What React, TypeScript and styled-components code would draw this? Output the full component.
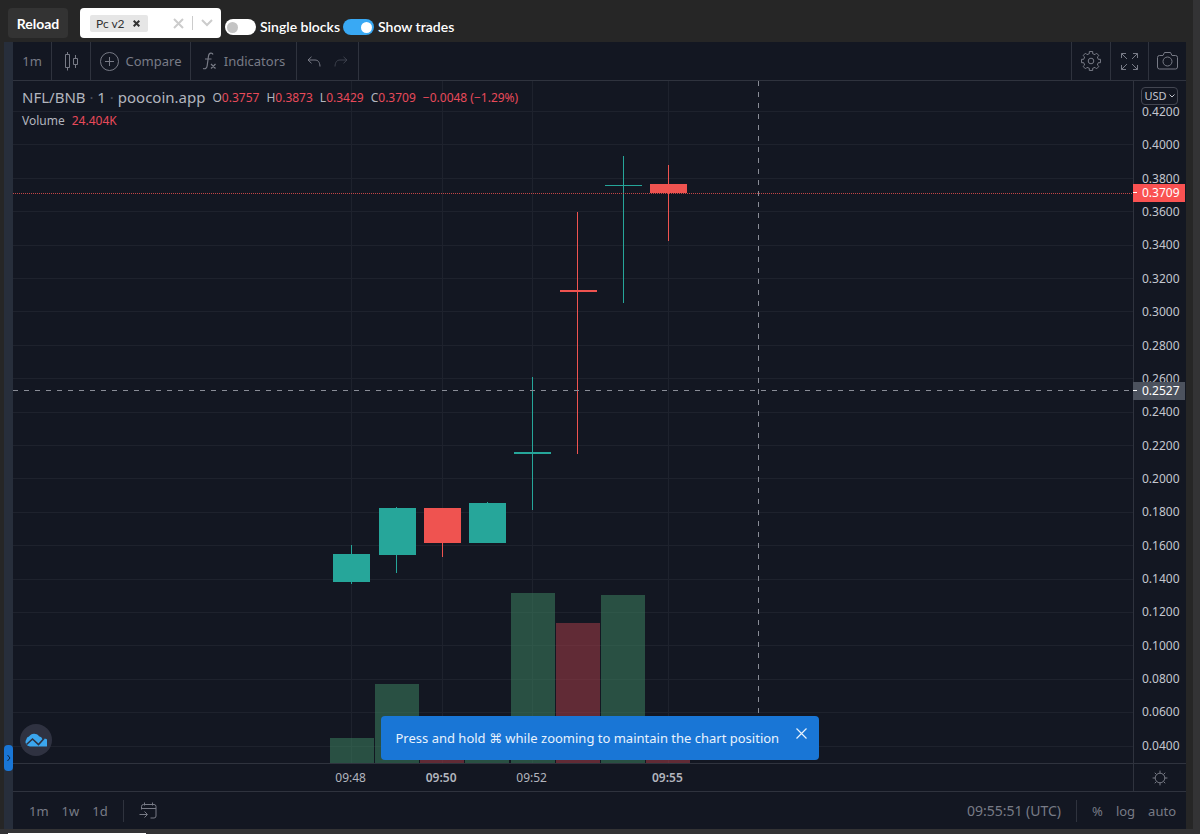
import React from "react";
import styled, { createGlobalStyle, css } from "styled-components";

const sans = `"Noto Sans", "DejaVu Sans", sans-serif`;
const lato = `Lato, "Liberation Sans", sans-serif`;

const color = {
  page: "#262626",
  edge: "#333335",
  chart: "#131722",
  strip: "#272e3b",
  line: "#2f333e",
  muted: "#787b86",
  text: "#b2b5be",
  up: "#26a69a",
  down: "#ef5350",
  value: "#e84a5a",
  blue: "#1976d6",
};

const GlobalStyle = createGlobalStyle`
  *, *::before, *::after { box-sizing: border-box; }
  body { margin: 0; background: ${color.page}; font-family: ${sans}; }
  button, input { font: inherit; color: inherit; margin: 0; padding: 0; border: 0; background: none; }
  button { cursor: pointer; }
  svg { display: block; }
`;

const Page = styled.div`
  display: flex;
  flex-direction: column;
  min-height: 100vh;
  border-right: 7px solid ${color.edge};
`;

/* ---------- header ---------- */

const Header = styled.header`
  display: flex;
  align-items: flex-start;
  height: 42px;
  padding: 8px 8px 0;
  font-family: ${lato};
  color: #fff;
`;

const ReloadButton = styled.button`
  width: 60px;
  height: 30px;
  margin-right: 12px;
  border-radius: 4px;
  background: #333;
  font-size: 14px;
  font-weight: 700;
`;

const Picker = styled.div`
  display: flex;
  align-items: center;
  width: 141px;
  height: 30px;
  margin-right: 4px;
  padding-left: 10px;
  border-radius: 4px;
  background: #fff;
  color: #333;
`;

const Chip = styled.span`
  display: flex;
  align-items: center;
  height: 17px;
  padding-left: 6px;
  border-radius: 2px;
  background: #e6e6e6;
  font-size: 12px;
`;

const ChipRemove = styled.button`
  display: grid;
  place-items: center;
  width: 23px;
  height: 17px;
`;

const PickerInput = styled.input`
  flex: 1;
  min-width: 0;
  outline: 0;
`;

const PickerButton = styled.button`
  display: grid;
  place-items: center;
  width: 28px;
  height: 30px;
  color: #ccc;
`;

const PickerDivider = styled.span`
  width: 1px;
  height: 14px;
  background: #ccc;
`;

const Toggle = styled.label`
  display: flex;
  align-items: center;
  gap: 4px;
  margin: 9px 3px 0 0;
  font-size: 14px;
  line-height: 20px;
  font-weight: 600;
  white-space: nowrap;
`;

const ToggleInput = styled.input`
  appearance: none;
  display: flex;
  align-items: center;
  width: 31px;
  height: 16px;
  padding: 0 2px;
  border-radius: 8px;
  background: #fff;
  cursor: pointer;

  &::before {
    content: "";
    width: 11px;
    height: 11px;
    border-radius: 50%;
    background: #c4c4c4;
  }
  &:checked {
    justify-content: flex-end;
    background: #39a9f4;
  }
  &:checked::before {
    background: #fff;
  }
`;

/* ---------- chart frame ---------- */

const Frame = styled.main`
  display: flex;
  margin: 0 7px 0 4px;
`;

const DrawingStrip = styled.aside`
  position: relative;
  flex: 0 0 9px;
  background: ${color.strip};
`;

const StripHandle = styled.button`
  position: absolute;
  left: 0;
  bottom: 58px;
  display: grid;
  place-items: center;
  width: 9px;
  height: 26px;
  border-radius: 4px;
  background: ${color.blue};
  color: #0d2440;
`;

const Chart = styled.section`
  flex: 1;
  min-width: 0;
  background: ${color.chart};
  color: ${color.muted};
`;

const Toolbar = styled.div`
  display: flex;
  height: 39px;
  border-bottom: 1px solid ${color.line};
`;

const ToolGroup = styled.div<{ $side: "left" | "right"; $width: number }>`
  display: flex;
  width: ${(p) => p.$width}px;
  padding: 0 4px;
  ${(p) =>
    p.$side === "left"
      ? css`
          border-right: 1px solid ${color.line};
        `
      : css`
          border-left: 1px solid ${color.line};
        `}
`;

const ToolButton = styled.button`
  flex: 1;
  display: flex;
  align-items: center;
  justify-content: center;
  gap: 7px;
  font-size: 13px;
  white-space: nowrap;
`;

const Spacer = styled.div`
  flex: 1;
`;

const PlotRow = styled.div`
  position: relative;
  display: flex;
  height: 682px;
`;

const Plot = styled.div`
  position: relative;
  flex: 1;
  min-width: 0;
  overflow: hidden;
`;

const Legend = styled.div`
  position: absolute;
  top: 5px;
  left: 9px;
  display: flex;
  flex-direction: column;
  gap: 1px;
  color: ${color.text};
  white-space: nowrap;
`;

const LegendRow = styled.div`
  display: flex;
  align-items: center;
  gap: 7px;
  height: 22px;
  font-size: 12px;
`;

const SymbolName = styled.h1`
  margin: 0;
  font-size: 15px;
  font-weight: 400;
`;

const Dot = styled.span`
  color: #4c505c;
`;

const Value = styled.span`
  color: ${color.value};
`;

const LogoBadge = styled.a`
  position: absolute;
  left: 7px;
  bottom: 7px;
  display: grid;
  place-items: center;
  width: 32px;
  height: 32px;
  border-radius: 50%;
  background: #2f3241;
`;

const PriceAxis = styled.div`
  position: relative;
  flex: 0 0 53px;
  display: flex;
  flex-direction: column;
  justify-content: space-between;
  padding: 23px 0 9px 8px;
  border-left: 1px solid ${color.line};
  color: #c3c6cf;
  font-size: 12px;
  line-height: 16px;
`;

const PriceTag = styled.div<{ $top: number; $fill: string }>`
  position: absolute;
  top: ${(p) => p.$top}px;
  left: -1px;
  right: 1px;
  height: 18px;
  padding-left: 9px;
  background: ${(p) => p.$fill};
  color: #fff;
  line-height: 18px;

  &::before {
    content: "";
    position: absolute;
    top: 8px;
    left: 0;
    width: 4px;
    height: 1px;
    background: #fff;
  }
`;

const CurrencyButton = styled.button`
  position: absolute;
  top: 6px;
  left: 7px;
  display: flex;
  align-items: center;
  justify-content: center;
  gap: 2px;
  width: 37px;
  height: 18px;
  border: 1px solid #434651;
  border-radius: 4px;
  background: ${color.chart};
  font-size: 11px;
`;

const Notice = styled.div`
  position: absolute;
  bottom: 3px;
  left: 50%;
  display: flex;
  width: 438px;
  height: 44px;
  padding-left: 15px;
  transform: translateX(-50%);
  border-radius: 4px;
  background: ${color.blue};
  color: #e8f2fd;
  font-size: 13px;
  line-height: 44px;
  white-space: nowrap;
`;

const NoticeClose = styled.button`
  display: grid;
  place-items: center;
  width: 34px;
  height: 34px;
  margin-left: auto;
`;

const TimeRow = styled.div`
  display: flex;
  height: 29px;
  border-top: 1px solid ${color.line};
  border-bottom: 1px solid ${color.line};
`;

const TimeAxis = styled.div`
  flex: 1;
  min-width: 0;
  padding-left: 315px;
`;

const TimeSlots = styled.div`
  display: grid;
  grid-template-columns: repeat(8, 1fr);
  width: 362px;
  text-align: center;
  font-size: 12px;
  line-height: 28px;
  color: ${color.text};
`;

const TimeLabel = styled.span<{ $major: boolean }>`
  font-weight: ${(p) => (p.$major ? 600 : 400)};
`;

const AxisSettings = styled.button`
  display: grid;
  place-items: center;
  flex: 0 0 53px;
  border-left: 1px solid ${color.line};
`;

const BottomBar = styled.div`
  display: flex;
  align-items: center;
  height: 37px;
  padding: 0 10px 0 16px;
  font-size: 13px;
  white-space: nowrap;
`;

const ButtonRun = styled.div`
  display: flex;
  gap: 13px;
`;

const Clock = styled.button`
  font-size: 14px;
`;

const BarDivider = styled.span`
  width: 1px;
  height: 22px;
  margin: 0 15px;
  background: ${color.line};
`;

const Footer = styled.footer`
  flex: 1;
  display: flex;
  align-items: flex-end;
  min-height: 5px;
  padding-left: 8px;
  background: ${color.edge};
`;

const FooterTab = styled.div`
  width: 138px;
  height: 1px;
  background: #fff;
`;

/* ---------- data ---------- */

type Bar = {
  open: number;
  close: number;
  high: number;
  low: number;
  up: boolean;
  volume: number;
};

/* vertical pixel positions inside the plot, top edge = 0 */
const bars: Bar[] = [
  { open: 473, close: 501, high: 464, low: 503, up: true, volume: 25 },
  { open: 427, close: 474, high: 426, low: 492, up: true, volume: 79 },
  { open: 427, close: 462, high: 427, low: 476, up: false, volume: 6 },
  { open: 422, close: 462, high: 421, low: 462, up: true, volume: 10 },
  { open: 371, close: 373, high: 296, low: 429, up: true, volume: 170 },
  { open: 209, close: 211, high: 131, low: 373, up: false, volume: 140 },
  { open: 104, close: 105, high: 75, low: 222, up: true, volume: 168 },
  { open: 103, close: 112, high: 84, low: 160, up: false, volume: 12 },
];

const times = ["09:48", "", "09:50", "", "09:52", "", "", "09:55"];
const prices = Array.from({ length: 20 }, (_, i) => (0.42 - i * 0.02).toFixed(4));
const plotHeight = 682;
const slot = 45.25;
const barCenter = (i: number) => Math.round(338 + i * slot);
const bodyLeft = (i: number) => Math.round(320.4 + i * slot);
const volumeLeft = (i: number) => Math.floor(317 + i * slot);
const priceLine = (i: number) => Math.round(30 + i * 33.4);

function CandlePlot() {
  return (
    <svg width="100%" height={plotHeight} shapeRendering="crispEdges" role="img" aria-label="NFL/BNB price and volume">
      {prices.map((p, i) => (
        <rect key={p} x="0" y={priceLine(i)} width="100%" height="1" fill="#1e222d" />
      ))}
      {times.map((t, i) =>
        t ? <rect key={t} x={barCenter(i)} y="0" width="1" height={plotHeight} fill="#1e222d" /> : null
      )}
      {bars.map((b, i) => (
        <rect
          key={i}
          x={volumeLeft(i)}
          y={plotHeight - b.volume}
          width="44"
          height={b.volume}
          fill={b.up ? "#3e8562" : "#a83e48"}
          fillOpacity="0.52"
        />
      ))}
      {bars.map((b, i) => (
        <g key={i} fill={b.up ? color.up : color.down}>
          <rect x={barCenter(i)} y={b.high} width="1" height={b.low - b.high} />
          <rect x={bodyLeft(i)} y={b.open} width="37" height={b.close - b.open} />
        </g>
      ))}
      <line x1="0" x2="100%" y1="112.5" y2="112.5" stroke={color.down} strokeDasharray="1 1" strokeOpacity="0.8" />
      <line x1="0" x2="100%" y1="309.5" y2="309.5" stroke="#8a8d97" strokeDasharray="5 6" />
      <line x1="745.5" x2="745.5" y1="0" y2={plotHeight} stroke="#8a8d97" strokeDasharray="5 6" />
    </svg>
  );
}

/* ---------- icons ---------- */

type IconProps = { w: number; h?: number; sw?: number; box?: string; children: React.ReactNode };

const Icon = ({ w, h = w, sw = 1, box, children }: IconProps) => (
  <svg
    width={w}
    height={h}
    viewBox={box ?? `0 0 ${w} ${h}`}
    fill="none"
    stroke="currentColor"
    strokeWidth={sw}
    aria-hidden="true"
  >
    {children}
  </svg>
);

const gearPath = (() => {
  const teeth = 8;
  const pts: string[] = [];
  for (let i = 0; i < teeth; i++) {
    const a = (i * 2 * Math.PI) / teeth;
    [
      [-0.22, 7.5],
      [-0.18, 9.6],
      [0.18, 9.6],
      [0.22, 7.5],
    ].forEach(([d, r]) => {
      pts.push(`${(11 + r * Math.sin(a + d)).toFixed(2)} ${(11 - r * Math.cos(a + d)).toFixed(2)}`);
    });
  }
  return `M${pts.join("L")}Z`;
})();

const sunRays = Array.from({ length: 8 }, (_, i) => {
  const a = (i * Math.PI) / 4;
  const at = (r: number) => `${(8 + r * Math.cos(a)).toFixed(2)} ${(8 + r * Math.sin(a)).toFixed(2)}`;
  return `M${at(5)}L${at(7.4)}`;
}).join("");

export default function App() {
  return (
    <>
      <GlobalStyle />
      <Page>
        <Header>
          <ReloadButton type="button">Reload</ReloadButton>
          <Picker>
            <Chip>
              Pc v2
              <ChipRemove type="button" aria-label="Remove Pc v2">
                <Icon w={7} sw={2}>
                  <path d="M.7 .7l5.6 5.6M6.3 .7L.7 6.3" />
                </Icon>
              </ChipRemove>
            </Chip>
            <PickerInput aria-label="Liquidity pool" />
            <PickerButton type="button" aria-label="Clear">
              <Icon w={11} sw={2}>
                <path d="M1 1l9 9M10 1L1 10" />
              </Icon>
            </PickerButton>
            <PickerDivider />
            <PickerButton type="button" aria-label="Open list">
              <Icon w={12} h={8} sw={2}>
                <path d="M1 1l5 5 5-5" />
              </Icon>
            </PickerButton>
          </Picker>
          <Toggle>
            <ToggleInput type="checkbox" />
            Single blocks
          </Toggle>
          <Toggle>
            <ToggleInput type="checkbox" defaultChecked />
            Show trades
          </Toggle>
        </Header>

        <Frame>
          <DrawingStrip>
            <StripHandle type="button" aria-label="Show drawing tools">
              <Icon w={4} h={8}>
                <path d="M.5 1l2.5 3-2.5 3" />
              </Icon>
            </StripHandle>
          </DrawingStrip>
          <Chart>
            <Toolbar>
              <ToolGroup $side="left" $width={39}>
                <ToolButton type="button">1m</ToolButton>
              </ToolGroup>
              <ToolGroup $side="left" $width={39}>
                <ToolButton type="button" aria-label="Candles">
                  <Icon w={13} h={20}>
                    <path d="M.5 3.500h4v13h-4zM2.500 1v2.500M2.500 16.500V19.500M8.500 7.500h4v6h-4zM10.500 4v3.500M10.500 13.500V17" />
                  </Icon>
                </ToolButton>
              </ToolGroup>
              <ToolGroup $side="left" $width={100}>
                <ToolButton type="button">
                  <Icon w={19}>
                    <circle cx="9.500" cy="9.500" r="9" />
                    <path d="M9.500 5v9M5 9.500h9" />
                  </Icon>
                  Compare
                </ToolButton>
              </ToolGroup>
              <ToolGroup $side="left" $width={106}>
                <ToolButton type="button">
                  <Icon w={15} h={18} sw={1.2}>
                    <path d="M11 2.500C10.500 .8 7 .2 6.500 4L5.200 13.500C4.900 16.300 3.500 17.200 1 16.500M3 7h6.500M9 12l4.500 4.500M13.500 12L9 16.500" />
                  </Icon>
                  Indicators
                </ToolButton>
              </ToolGroup>
              <ToolGroup $side="left" $width={62}>
                <ToolButton type="button" aria-label="Undo">
                  <Icon w={14} h={11}>
                    <path d="M4.500 .8L1 4l3.500 3.300M1 4h7c3 0 4.800 2 5 6.500" />
                  </Icon>
                </ToolButton>
                <ToolButton type="button" aria-label="Redo" disabled>
                  <Icon w={14} h={11}>
                    <path stroke="#3e424e" d="M9.500 .8L13 4 9.500 7.300M13 4H6C3 4 1.200 6 1 10.500" />
                  </Icon>
                </ToolButton>
              </ToolGroup>
              <Spacer />
              <ToolGroup $side="right" $width={39}>
                <ToolButton type="button" aria-label="Settings">
                  <Icon w={22}>
                    <path strokeLinejoin="round" d={gearPath} />
                    <circle cx="11" cy="11" r="2.800" />
                  </Icon>
                </ToolButton>
              </ToolGroup>
              <ToolGroup $side="right" $width={38}>
                <ToolButton type="button" aria-label="Fullscreen">
                  <Icon w={17}>
                    <path d="M.5 5V.5H5M.5 .5l5.500 5.500M12 .5h4.500V5M16.500 .5L11 6M.5 12v4.500H5M.5 16.500L6 11M12 16.500h4.500V12M16.500 16.500L11 11" />
                  </Icon>
                </ToolButton>
              </ToolGroup>
              <ToolGroup $side="right" $width={38}>
                <ToolButton type="button" aria-label="Take a snapshot">
                  <Icon w={21} h={18}>
                    <path d="M2.500 3.500h3.500L7.500 .5h6l1.500 3h3.500a2 2 0 0 1 2 2v9.500a2 2 0 0 1-2 2h-16a2 2 0 0 1-2-2V5.500a2 2 0 0 1 2-2z" />
                    <circle cx="10.500" cy="9.500" r="4.500" />
                  </Icon>
                </ToolButton>
              </ToolGroup>
            </Toolbar>

            <PlotRow>
              <Plot>
                <CandlePlot />
                <Legend>
                  <LegendRow>
                    <SymbolName>
                      NFL/BNB <Dot>·</Dot> 1 <Dot>·</Dot> poocoin.app
                    </SymbolName>
                    <span>
                      O<Value>0.3757</Value>
                    </span>
                    <span>
                      H<Value>0.3873</Value>
                    </span>
                    <span>
                      L<Value>0.3429</Value>
                    </span>
                    <span>
                      C<Value>0.3709</Value>
                    </span>
                    <Value>−0.0048 (−1.29%)</Value>
                  </LegendRow>
                  <LegendRow>
                    <span>Volume</span>
                    <Value>24.404K</Value>
                  </LegendRow>
                </Legend>
                <LogoBadge href="#" aria-label="TradingView">
                  <svg width="22" height="14" viewBox="0 0 22 14" aria-hidden="true">
                    <path
                      fill="#3ba6ee"
                      d="M5 13.500a4.500 4.500 0 0 1-3.700-7A3.500 3.500 0 0 1 4 3.500 6 6 0 0 1 14 3.200a4 4 0 0 1 3.500 3A4 4 0 0 1 21.500 13.500z"
                    />
                    <path fill="none" stroke="#2f3241" strokeWidth="1.600" d="M1.500 11.500L7.500 6l6 5.500 5.500-6" />
                  </svg>
                </LogoBadge>
              </Plot>
              <PriceAxis>
                {prices.map((p) => (
                  <span key={p}>{p}</span>
                ))}
                <CurrencyButton type="button">
                  USD
                  <Icon w={6} h={4}>
                    <path d="M.5 .5L3 3 5.500 .5" />
                  </Icon>
                </CurrencyButton>
                <PriceTag $top={103} $fill="#fa5252">
                  0.3709
                </PriceTag>
                <PriceTag $top={301} $fill="#4c525e">
                  0.2527
                </PriceTag>
              </PriceAxis>
              <Notice role="status">
                Press and hold ⌘ while zooming to maintain the chart position
                <NoticeClose type="button" aria-label="Close">
                  <Icon w={11} sw={1.2}>
                    <path d="M.5 .5l10 10M10.500 .5l-10 10" />
                  </Icon>
                </NoticeClose>
              </Notice>
            </PlotRow>

            <TimeRow>
              <TimeAxis>
                <TimeSlots>
                  {times.map((t, i) => (
                    <TimeLabel key={i} $major={t === "09:50" || t === "09:55"}>
                      {t}
                    </TimeLabel>
                  ))}
                </TimeSlots>
              </TimeAxis>
              <AxisSettings type="button" aria-label="Axis settings">
                <Icon w={16}>
                  <circle cx="8" cy="8" r="4.800" />
                  <path d={sunRays} />
                </Icon>
              </AxisSettings>
            </TimeRow>

            <BottomBar>
              <ButtonRun>
                <button type="button">1m</button>
                <button type="button">1w</button>
                <button type="button">1d</button>
              </ButtonRun>
              <BarDivider />
              <button type="button" aria-label="Go to date">
                <Icon w={18} h={17}>
                  <path d="M2.500 7.500V4.500a2 2 0 0 1 2-2h10.500a2 2 0 0 1 2 2v9.500a2 2 0 0 1-2 2h-3.500M2.500 6.500h14.500M5.500 .5v3M13.500 .5v3M.5 12.500h7.500M5.500 9.500l3 3-3 3" />
                </Icon>
              </button>
              <Spacer />
              <Clock type="button">09:55:51 (UTC)</Clock>
              <BarDivider />
              <ButtonRun>
                <button type="button">%</button>
                <button type="button">log</button>
                <button type="button">auto</button>
              </ButtonRun>
            </BottomBar>
          </Chart>
        </Frame>
        <Footer>
          <FooterTab />
        </Footer>
      </Page>
    </>
  );
}
